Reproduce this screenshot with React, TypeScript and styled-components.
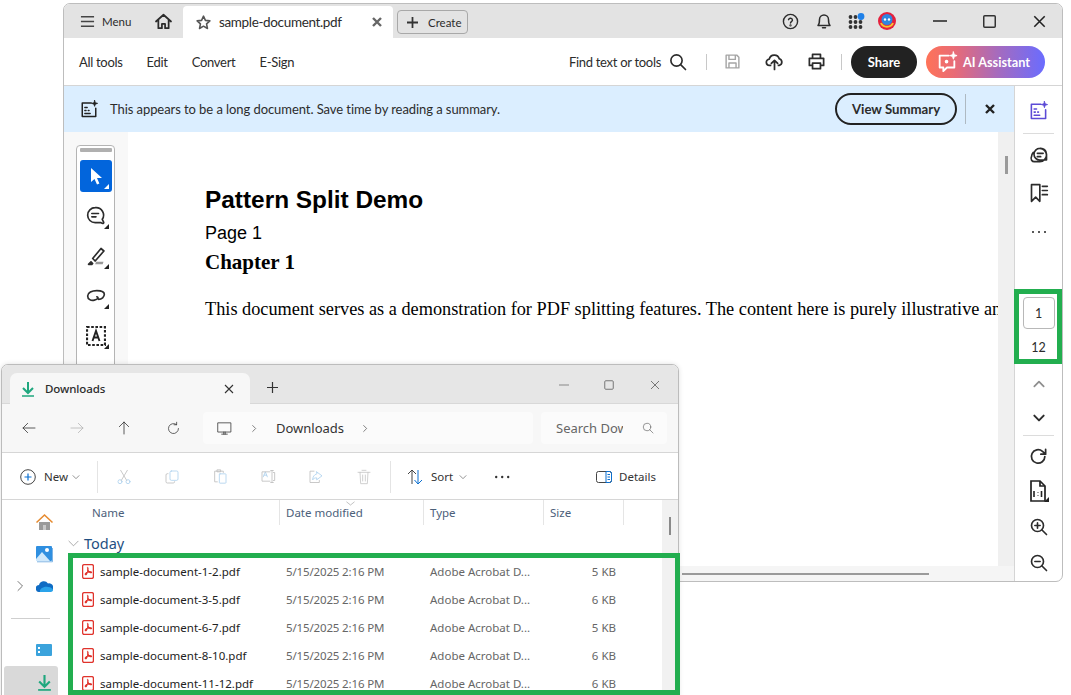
import React from "react";
import styled, { createGlobalStyle } from "styled-components";

const Global = createGlobalStyle`
  html, body { margin: 0; padding: 0; background: #fff; }
  body { font-family: "Noto Sans", "Open Sans", sans-serif; color: #2c2c2c; }
  * { box-sizing: border-box; }
`;

const Desktop = styled.div`
  position: relative;
  width: 1071px;
  height: 695px;
  overflow: hidden;
  background: #fff;
`;

/* ---------- Acrobat window ---------- */
const AcrobatWindow = styled.div`
  position: absolute;
  left: 63px;
  top: 3px;
  width: 1000px;
  height: 579px;
  border: 1px solid #bdbdbd;
  border-radius: 7px;
  overflow: hidden;
  display: flex;
  flex-direction: column;
  background: #fff;
  font-family: Lato, "Noto Sans", sans-serif;
`;
const TitleBar = styled.div`
  height: 34px;
  flex: none;
  background: #e3e3e3;
  display: flex;
  align-items: stretch;
`;
const Slot = styled.div<{ $w: number; $ml?: number }>`
  flex: none;
  width: ${(p) => p.$w}px;
  margin-left: ${(p) => p.$ml ?? 0}px;
  display: flex;
  align-items: center;
  justify-content: center;
`;
const MenuLabel = styled.span`
  font-size: 11.5px;
  margin-left: 7px;
`;
const MenuButton = styled.div`
  display: flex;
  align-items: center;
  padding-left: 16px;
  width: 80px;
`;
const DocTab = styled.div`
  width: 210px;
  background: #fff;
  border-radius: 4px 4px 0 0;
  margin-top: 2px;
  display: flex;
  align-items: center;
  padding-left: 12px;
  gap: 7px;
`;
const TabTitle = styled.span`
  font-size: 13.5px;
  letter-spacing: -0.35px;
  width: 146px;
  white-space: nowrap;
`;
const CreateButton = styled.div`
  width: 71px;
  height: 24px;
  margin: 6px 0 0 4px;
  border: 1px solid #a8a8a8;
  border-radius: 4px;
  display: flex;
  align-items: center;
  gap: 10px;
  padding-left: 9px;
  font-size: 11.5px;
`;
const Spacer = styled.div`
  flex: 1;
`;
const MainBar = styled.div`
  height: 48px;
  flex: none;
  display: flex;
  align-items: center;
  padding-left: 15px;
  border-bottom: 1px solid #d5d5d5;
`;
const NavLinks = styled.div`
  display: flex;
  gap: 24px;
  font-size: 13px;
  letter-spacing: -0.3px;
`;
const FindLabel = styled.span`
  font-size: 13px;
  letter-spacing: -0.3px;
  white-space: nowrap;
`;
const BarRule = styled.div`
  width: 1px;
  height: 16px;
  background: #c8c8c8;
`;
const ShareButton = styled.div`
  width: 66px;
  height: 32px;
  margin-left: 9px;
  border-radius: 16px;
  background: #222;
  color: #fff;
  font-size: 13px;
  font-weight: 700;
  display: flex;
  align-items: center;
  justify-content: center;
`;
const AiButton = styled.div`
  width: 119px;
  height: 32px;
  margin-left: 9px;
  border-radius: 16px;
  background: linear-gradient(90deg, #ff7358 0%, #e76b78 25%, #a66bbd 60%, #6a6cff 100%);
  color: #fff;
  font-size: 12.7px;
  font-weight: 700;
  display: flex;
  align-items: center;
  gap: 5px;
  padding-left: 10px;
`;
const WorkArea = styled.div`
  flex: 1;
  display: flex;
  min-height: 0;
`;
const MainColumn = styled.div`
  flex: 1;
  min-width: 0;
  display: flex;
  flex-direction: column;
`;
const Banner = styled.div`
  height: 46px;
  flex: none;
  background: #dbeeff;
  display: flex;
  align-items: center;
  padding-left: 16px;
`;
const BannerText = styled.span`
  font-size: 13px;
  letter-spacing: -0.07px;
  margin-left: 12px;
  white-space: nowrap;
`;
const SummaryButton = styled.div`
  width: 122px;
  height: 32px;
  border: 2px solid #222;
  border-radius: 16px;
  font-size: 13.2px;
  font-weight: 700;
  display: flex;
  align-items: center;
  justify-content: center;
`;
const BannerRule = styled.div`
  width: 1px;
  height: 30px;
  background: #aeb9c2;
  margin-left: 8px;
`;
const DocRow = styled.div`
  flex: 1;
  min-height: 0;
  display: flex;
`;
const ToolGutter = styled.div`
  width: 64px;
  flex: none;
  background: #f8f8f8;
  padding: 13px 0 0 12px;
  overflow: hidden;
`;
const ToolStrip = styled.div`
  width: 39px;
  height: 400px;
  border: 1px solid #b4b4b4;
  border-radius: 4px 4px 0 0;
  background: #fff;
  display: flex;
  flex-direction: column;
  align-items: center;
  padding: 2px 0 0;
`;
const StripHandle = styled.div`
  width: 32px;
  height: 4px;
  border-radius: 1px;
  background: #b0b0b0;
  margin-bottom: 8px;
`;
const ToolButton = styled.div<{ $active?: boolean }>`
  position: relative;
  width: 32px;
  height: ${(p) => (p.$active ? 32 : 40)}px;
  margin-bottom: ${(p) => (p.$active ? 4 : 0)}px;
  border-radius: 3px;
  background: ${(p) => (p.$active ? "#0265dc" : "transparent")};
  display: flex;
  align-items: center;
  justify-content: center;
  &::after {
    content: "";
    position: absolute;
    right: 3px;
    bottom: ${(p) => (p.$active ? 3 : 7)}px;
    width: 0;
    height: 0;
    border-left: 5px solid transparent;
    border-bottom: 5px solid ${(p) => (p.$active ? "#fff" : "#222")};
  }
`;
const Page = styled.div`
  flex: 1;
  min-width: 0;
  background: #fff;
  padding: 53px 0 0 77px;
  overflow: hidden;
  white-space: nowrap;
`;
const DocTitle = styled.div`
  font: 700 24.4px/30px "Liberation Sans", Arial, sans-serif;
  color: #000;
`;
const DocPage = styled.div`
  font: 400 18px/21px "Liberation Sans", Arial, sans-serif;
  color: #000;
  margin-top: 8px;
`;
const DocChapter = styled.div`
  font: 700 21px/24px "Liberation Serif", "Times New Roman", serif;
  color: #000;
  margin-top: 6px;
`;
const DocPara = styled.div`
  font: 400 18.3px/22px "Liberation Serif", "Times New Roman", serif;
  color: #000;
  margin-top: 24px;
`;
const VScroll = styled.div`
  width: 16px;
  flex: none;
  background: #f0f0f0;
  display: flex;
  justify-content: center;
  padding-top: 24px;
`;
const VThumb = styled.div`
  width: 3px;
  height: 18px;
  background: #9a9a9a;
`;
const HScroll = styled.div`
  height: 15px;
  flex: none;
  background: #f5f5f5;
  display: flex;
  align-items: center;
  padding-left: 618px;
`;
const HThumb = styled.div`
  width: 247px;
  height: 2px;
  background: #9a9a9a;
`;
const Rail = styled.div`
  width: 48px;
  flex: none;
  border-left: 1px solid #d5d5d5;
  display: flex;
  flex-direction: column;
  align-items: stretch;
  padding-top: 5px;
`;
const RailButton = styled.div<{ $h: number }>`
  height: ${(p) => p.$h}px;
  flex: none;
  display: flex;
  align-items: center;
  justify-content: center;
`;
const RailRule = styled.div`
  height: 1px;
  flex: none;
  margin: 4px 8px 0;
  background: #dcdcdc;
`;
const PageBlock = styled.div`
  height: 74px;
  flex: none;
  margin-top: 35px;
  display: flex;
  flex-direction: column;
  align-items: center;
  padding-top: 8px;
  font-size: 12.5px;
`;
const PageBox = styled.div`
  width: 32px;
  height: 32px;
  border: 1px solid #b8b8b8;
  border-radius: 4px;
  display: flex;
  align-items: center;
  justify-content: center;
`;
const PageTotal = styled.div`
  margin-top: 10px;
  line-height: 17px;
`;

/* ---------- Explorer window ---------- */
const ExplorerWindow = styled.div`
  position: absolute;
  left: 1px;
  top: 364px;
  width: 678px;
  height: 340px;
  border: 1px solid #bcbcbc;
  border-radius: 7px 7px 0 0;
  overflow: hidden;
  display: flex;
  flex-direction: column;
  background: #fff;
  box-shadow: 0 0 5px rgba(0, 0, 0, 0.12);
`;
const ExTitleBar = styled.div`
  height: 39px;
  flex: none;
  background: #e6e6e6;
  display: flex;
  align-items: flex-end;
  padding-left: 8px;
  border-bottom: 1px solid #d8d8d8;
`;
const ExTab = styled.div`
  width: 240px;
  height: 31px;
  margin-bottom: -1px;
  background: #f7f7f7;
  border-radius: 7px 7px 0 0;
  display: flex;
  align-items: center;
  padding: 0 16px 0 10px;
  gap: 9px;
  font-size: 11.5px;
  font-weight: 500;
  letter-spacing: -0.1px;
`;
const ExTabTitle = styled.span`
  flex: 1;
`;
const NewTab = styled.div`
  width: 44px;
  height: 31px;
  display: flex;
  align-items: center;
  justify-content: center;
`;
const WinControls = styled.div`
  display: flex;
  height: 39px;
  align-self: flex-start;
  margin-left: auto;
`;
const NavBar = styled.div`
  height: 49px;
  flex: none;
  background: #f7f7f7;
  border-bottom: 1px solid #d6d6d6;
  display: flex;
  align-items: center;
`;
const AddressBox = styled.div`
  width: 330px;
  height: 32px;
  margin-left: 22px;
  background: #fbfbfb;
  border-radius: 4px;
  display: flex;
  align-items: center;
  padding-left: 13px;
  font-size: 13px;
  color: #333;
`;
const SearchBox = styled.div`
  width: 126px;
  height: 32px;
  margin-left: 8px;
  background: #fbfbfb;
  border-radius: 4px;
  display: flex;
  align-items: center;
  padding-left: 15px;
  font-size: 13px;
  color: #666;
`;
const SearchText = styled.span`
  width: 67px;
  overflow: hidden;
  white-space: nowrap;
  margin-right: 19px;
`;
const CommandBar = styled.div`
  height: 47px;
  flex: none;
  border-bottom: 1px solid #d6d6d6;
  padding-top: 1px;
  display: flex;
  align-items: center;
  font-size: 11.5px;
  color: #333;
`;
const CmdRule = styled.div<{ $ml: number }>`
  width: 1px;
  height: 32px;
  background: #e4e4e4;
  margin-left: ${(p) => p.$ml}px;
`;
const CmdLabel = styled.span<{ $ml?: number }>`
  margin-left: ${(p) => p.$ml ?? 0}px;
  white-space: nowrap;
`;
const ExBody = styled.div`
  flex: 1;
  min-height: 0;
  display: flex;
`;
const Sidebar = styled.div`
  width: 59px;
  flex: none;
  padding: 6px 0 0 2px;
  display: flex;
  flex-direction: column;
`;
const SideItem = styled.div<{ $selected?: boolean }>`
  position: relative;
  width: 54px;
  height: 32px;
  flex: none;
  padding-left: 32px;
  display: flex;
  align-items: center;
  background: ${(p) => (p.$selected ? "#d9d9d9" : "transparent")};
  border-radius: 3px;
`;
const SideChevron = styled.span`
  position: absolute;
  left: 10px;
  top: 10px;
  display: flex;
`;
const SideRule = styled.div`
  height: 32px;
  flex: none;
  width: 54px;
  display: flex;
  align-items: center;
  padding: 0 8px 0 7px;
  &::before {
    content: "";
    flex: 1;
    height: 1px;
    background: #cfcfcf;
  }
`;
const ListPane = styled.div`
  flex: 1;
  min-width: 0;
  font-size: 11.5px;
`;
const HeaderRow = styled.div`
  position: relative;
  display: grid;
  grid-template-columns: 219px 144px 120px 80px;
  height: 25px;
  color: #4c607a;
  align-items: center;
`;
const HeaderCell = styled.div<{ $first?: boolean }>`
  height: 25px;
  line-height: 25px;
  padding-left: ${(p) => (p.$first ? 31 : 6)}px;
  border-right: 1px solid #e5e5e5;
`;
const SortCaret = styled.span`
  position: absolute;
  left: 285px;
  top: -1px;
  display: flex;
`;
const GroupRow = styled.div`
  height: 32px;
  padding: 4px 0 0 7px;
  display: flex;
  align-items: center;
  gap: 5px;
  color: #1f4f82;
  font-size: 14.5px;
`;
const FileRow = styled.div`
  display: grid;
  grid-template-columns: 219px 144px 120px 74px;
  height: 28px;
  align-items: center;
  color: #666;
  white-space: nowrap;
`;
const NameCell = styled.div`
  display: flex;
  align-items: center;
  gap: 6px;
  padding-left: 21px;
  color: #222;
`;
const DateCell = styled.div`
  padding-left: 6px;
  letter-spacing: -0.15px;
`;
const TypeCell = styled.div`
  padding-left: 6px;
`;
const SizeCell = styled.div`
  text-align: right;
  padding-right: 2px;
`;
const ExScroll = styled.div`
  width: 16px;
  flex: none;
  background: #f1f1f1;
  padding: 17px 0 0 7px;
`;
const ExThumb = styled.div`
  width: 2px;
  height: 18px;
  background: #8a8a8a;
`;
const Highlight = styled.div<{ $l: number; $t: number; $w: number; $h: number }>`
  position: absolute;
  left: ${(p) => p.$l}px;
  top: ${(p) => p.$t}px;
  width: ${(p) => p.$w}px;
  height: ${(p) => p.$h}px;
  border: 5px solid #22ae4f;
  pointer-events: none;
`;

/* ---------- icons ---------- */
type P = { s?: number; c?: string };
const Ico: React.FC<P & { sw?: number; vb?: string; children: React.ReactNode }> = ({ s = 18, c = "#2c2c2c", sw = 1.8, vb = "0 0 24 24", children }) => (
  <svg width={s} height={s} viewBox={vb} fill="none" stroke={c} strokeWidth={sw} strokeLinecap="round" strokeLinejoin="round">
    {children}
  </svg>
);
const Burger = () => <Ico s={15} vb="0 0 16 16" sw={1.5} c="#444"><path d="M1 3h14M1 8h14M1 13h14" strokeLinecap="butt" /></Ico>;
const Home = () => <Ico s={19} sw={2.2}><path d="M2.500 12 12 3.500 21.500 12M5.500 10v10.500h4.500v-5.500h4v5.500h4.500V10" /></Ico>;
const Star = () => <Ico s={17} c="#555" sw={2.2}><path d="M12 3l2.700 6 6.300.7-4.700 4.300 1.300 6.500L12 17.200 6.400 20.500l1.300-6.500L3 9.700 9.300 9z" /></Ico>;
const X = ({ s = 10, c = "#666", sw = 2.4 }: P & { sw?: number }) => <Ico s={s} vb="0 0 10 10" c={c} sw={sw}><path d="M1 1l8 8M9 1l-8 8" strokeLinecap="butt" /></Ico>;
const Plus = ({ s = 11, c = "#333", sw = 1.6 }: P & { sw?: number }) => <Ico s={s} vb="0 0 10 10" c={c} sw={sw}><path d="M5 0v10M0 5h10" strokeLinecap="butt" /></Ico>;
const Help = () => <Ico s={17} sw={2}><circle cx="12" cy="12" r="10" /><path d="M9.200 9.400a2.900 2.900 0 0 1 5.600.6c0 2-2.800 2.400-2.800 4.200" /><circle cx="12" cy="17.500" r=".6" /></Ico>;
const Bell = () => <Ico s={18} sw={2}><path d="M4 18c2-2 2-4 2-8a6 6 0 0 1 12 0c0 4 0 6 2 8zM10 21h4" /></Ico>;
const Apps = () => (
  <svg width="17" height="17" viewBox="0 0 17 17">
    {[0, 1, 2].flatMap((r) => [0, 1, 2].map((k) => <circle key={`${r}${k}`} cx={2.500 + k * 5} cy={4 + r * 5} r={1.900} fill="#333" />))}
    <circle cx="13" cy="3.500" r="3.400" fill="#1f80e8" />
  </svg>
);
const Avatar = () => (
  <svg width="18" height="18" viewBox="0 0 18 18">
    <circle cx="9" cy="9" r="9" fill="#e5213d" />
    <circle cx="9" cy="7.500" r="5.500" fill="#2f86e0" />
    <path d="M3 11c2 5 10 5 12 0" stroke="#f6c431" strokeWidth="2" fill="none" />
    <circle cx="7" cy="7.500" r="1.200" fill="#fff" /><circle cx="11" cy="7.500" r="1.200" fill="#fff" />
  </svg>
);
const Min = ({ c = "#222", w = 14, sw = 1.6 }: { c?: string; w?: number; sw?: number }) => <svg width={w} height="4" viewBox={`0 0 ${w} 4`}><path d={`M0 2h${w}`} stroke={c} strokeWidth={sw} /></svg>;
const Max = ({ c = "#333", s = 13, sw = 1.500 }: { c?: string; s?: number; sw?: number }) => <svg width={s} height={s} viewBox={`0 0 ${s} ${s}`}><rect x=".75" y=".75" width={s - 1.500} height={s - 1.500} rx="1" fill="none" stroke={c} strokeWidth={sw} /></svg>;
const Search = () => <Ico s={18} sw={2.200}><circle cx="10" cy="10" r="7.500" /><path d="M15.500 15.500 22 22" /></Ico>;
const Save = () => <Ico s={17} c="#a5a5a5" sw={2}><path d="M3 3h15l3 3v15H3zM7 3v6h9V3M7 21v-7h10v7" /></Ico>;
const Upload = () => <Ico s={19} sw={2.200}><path d="M7 17H6a4 4 0 0 1-.6-8A6.500 6.500 0 0 1 18 8.500 4.400 4.400 0 0 1 18 17h-1M12 22V11M8 14.500 12 10.500l4 4" /></Ico>;
const Print = () => <Ico s={19} sw={2.200}><path d="M7 8V3h10v5M7 17H3V8h18v9h-4M7 14h10v7H7z" /></Ico>;
const Spark = ({ c = "#222", s = 18 }: P) => (
  <Ico s={s} c={c} sw={2}>
    <path d="M15 4H3v18h18V11" />
    <path d="M6.500 10h3M6.500 14h1.500M11 14h1M6.500 18h7" />
    <path d="M19.500 .5l1 3 3 1-3 1-1 3-1-3-3-1 3-1z" fill={c} strokeWidth="1" />
  </Ico>
);
const AiIcon = () => (
  <Ico s={22} c="#fff" sw={2}>
    <path d="M14 5H4v13h4v4l4-4h8v-7" />
    <circle cx="11.500" cy="11.500" r="1" fill="#fff" />
    <path d="M19 1l1 3 3 1-3 1-1 3-1-3-3-1 3-1z" fill="#fff" strokeWidth="1" />
  </Ico>
);
const Arrow = ({ c = "#fff" }: P) => <svg width="14" height="17" viewBox="0 0 14 17"><path d="M2 0v14l3.500-3 2.500 5.500 2.400-1L8 10h5z" fill={c} /></svg>;
const Comment = () => <Ico s={20} sw={2}><path d="M11 2a9 9 0 1 0 0 18h7c2 1.500 4 1 3-1l-1.500-3A9 9 0 0 0 11 2z" /><path d="M7 9h8M7 13h5" /></Ico>;
const Highlighter = () => (
  <Ico s={20} sw={2}>
    <path d="M8 15 18 3l3.500 3L11 18z" />
    <path d="M3 22l3-3 2 2-1 1z" fill="#222" />
    <path d="M11 22h9l1-3h-9z" fill="#999" stroke="none" />
  </Ico>
);
const Lasso = () => <Ico s={20} sw={2}><path d="M15 16c4 0 7-3 7-6 0-2.500-3-4.500-9-4.500S2 8 2 12s4 6 8 5 6-3 3-4" /></Ico>;
const TextSelect = () => (
  <svg width="20" height="20" viewBox="0 0 20 20" fill="none">
    <rect x="1" y="1" width="18" height="18" stroke="#222" strokeWidth="2.200" strokeDasharray="2.600 1.600" />
    <path d="M6.500 15 10 5l3.500 10M7.800 11.500h4.400" stroke="#222" strokeWidth="1.900" />
  </svg>
);
const CommentStack = () => <Ico s={20} sw={2}><path d="M13 4a8 8 0 1 1 0 16H7a4 4 0 0 1-4-6 8 8 0 0 1 2-5M13 4a7 7 0 0 0-7 7 7 7 0 0 0 7 7h8v-7a7 7 0 0 0-8-7z" /><path d="M10 10h7M10 14h4" /></Ico>;
const Bookmark = () => <Ico s={20} sw={2}><path d="M3 2h10v20l-5-5-5 5zM16 4h6M16 9h6M16 14h6" /></Ico>;
const Dots = ({ c = "#222", g = 6, r = 1 }: { c?: string; g?: number; r?: number }) => <svg width={g * 2 + r * 2 + 2} height="6" viewBox={`0 0 ${g * 2 + r * 2 + 2} 6`}>{[0, 1, 2].map((i) => <circle key={i} cx={r + 1 + i * g} cy="3" r={r} fill={c} />)}</svg>;
const ChevUp = () => <Ico s={14} c="#8e8e8e" sw={3}><path d="M4 16l8-8 8 8" /></Ico>;
const ChevDown = () => <Ico s={14} sw={3.400}><path d="M4 8l8 8 8-8" /></Ico>;
const Rotate = () => <Ico s={19} sw={2.200}><path d="M20 12a8.500 8.500 0 1 1-3-6.500L21 9M21 3v6h-6" /></Ico>;
const FitPage = () => (
  <svg width="20" height="22" viewBox="0 0 20 22" fill="none">
    <path d="M2 1h9l5 5v15H2z" stroke="#222" strokeWidth="1.700" />
    <path d="M11 1v5h5" stroke="#222" strokeWidth="1.700" />
    <path d="M5 11v6M9 12v.5M9 15.500v.5M12.500 11v6" stroke="#222" strokeWidth="1.600" />
    <path d="M20 17v5h-5z" fill="#222" />
  </svg>
);
const Zoom = ({ plus }: { plus?: boolean }) => <Ico s={18} sw={2.200}><circle cx="10" cy="10" r="8" /><path d="M16 16l6 6M6.500 10h7" />{plus && <path d="M10 6.500v7" />}</Ico>;
const Thin = ({ s = 18, c = "#333", children }: P & { children: React.ReactNode }) => <Ico s={s} c={c} sw={1.200}>{children}</Ico>;
const Dl = ({ s = 16 }: P) => <svg width={s} height={s} viewBox="0 0 16 16" fill="none"><path d="M8 1v10M3 7l5 5 5-5" stroke="#1fa77e" strokeWidth="2" /><path d="M2 15h12" stroke="#1fa77e" strokeWidth="1.600" /></svg>;
const Chev = ({ c = "#444", s = 10 }: P) => <Ico s={s} c={c} sw={2}><path d="M8 3l9 9-9 9" /></Ico>;
const Down = ({ c = "#777", s = 8 }: P) => <Ico s={s} c={c} sw={2.400}><path d="M3 8l9 9 9-9" /></Ico>;
const Pdf = () => (
  <svg width="12" height="15" viewBox="0 0 12 15" fill="none">
    <rect x=".6" y=".6" width="10.800" height="13.800" rx="1.600" fill="#fff" stroke="#e0332c" strokeWidth="1.300" />
    <path d="M6 3.500c-.6 2 .3 3.500 1.300 4.600.7.7 1.900.8 2.200.3.2-.6-1.200-.8-2.600-.6-1.400.2-3 .9-3.500 2-.4.9.4 1.200 1 .5.9-1 1.600-3.500 1.400-5.700-.1-1.200-.3-1.500-.6-1.100" stroke="#e0332c" strokeWidth="1.200" />
  </svg>
);

const files: [string, string][] = [
  ["sample-document-1-2.pdf", "5 KB"],
  ["sample-document-3-5.pdf", "6 KB"],
  ["sample-document-6-7.pdf", "5 KB"],
  ["sample-document-8-10.pdf", "6 KB"],
  ["sample-document-11-12.pdf", "6 KB"],
];

const railTop: [number, React.ReactNode][] = [
  [42, <CommentStack key="c" />],
  [34, <Bookmark key="b" />],
  [44, <Dots key="d" g={6} r={1} />],
];

export default function App() {
  return (
    <Desktop>
      <Global />
      <AcrobatWindow>
        <TitleBar>
          <MenuButton>
            <Burger />
            <MenuLabel>Menu</MenuLabel>
          </MenuButton>
          <Slot $w={39}><Home /></Slot>
          <DocTab>
            <Star />
            <TabTitle>sample-document.pdf</TabTitle>
            <X />
          </DocTab>
          <CreateButton><Plus />Create</CreateButton>
          <Spacer />
          <Slot $w={17}><Help /></Slot>
          <Slot $w={18} $ml={16}><Bell /></Slot>
          <Slot $w={17} $ml={15}><Apps /></Slot>
          <Slot $w={18} $ml={13}><Avatar /></Slot>
          <Slot $w={14} $ml={37}><Min /></Slot>
          <Slot $w={14} $ml={35}><Max /></Slot>
          <Slot $w={14} $ml={36}><X s={13} c="#222" sw={1.200} /></Slot>
          <Slot $w={16} />
        </TitleBar>
        <MainBar>
          <NavLinks>
            <span>All tools</span>
            <span>Edit</span>
            <span>Convert</span>
            <span>E-Sign</span>
          </NavLinks>
          <Spacer />
          <FindLabel>Find text or tools</FindLabel>
          <Slot $w={18} $ml={8}><Search /></Slot>
          <Slot $w={1} $ml={19}><BarRule /></Slot>
          <Slot $w={17} $ml={17}><Save /></Slot>
          <Slot $w={19} $ml={24}><Upload /></Slot>
          <Slot $w={19} $ml={23}><Print /></Slot>
          <Slot $w={1} $ml={15}><BarRule /></Slot>
          <ShareButton>Share</ShareButton>
          <AiButton><AiIcon />AI Assistant</AiButton>
          <Slot $w={17} />
        </MainBar>
        <WorkArea>
          <MainColumn>
            <Banner>
              <Spark />
              <BannerText>This appears to be a long document. Save time by reading a summary.</BannerText>
              <Spacer />
              <SummaryButton>View Summary</SummaryButton>
              <BannerRule />
              <Slot $w={11} $ml={18}><X c="#222" /></Slot>
              <Slot $w={19} />
            </Banner>
            <DocRow>
              <ToolGutter>
                <ToolStrip>
                  <StripHandle />
                  <ToolButton $active><Arrow /></ToolButton>
                  <ToolButton><Comment /></ToolButton>
                  <ToolButton><Highlighter /></ToolButton>
                  <ToolButton><Lasso /></ToolButton>
                  <ToolButton><TextSelect /></ToolButton>
                </ToolStrip>
              </ToolGutter>
              <Page>
                <DocTitle>Pattern Split Demo</DocTitle>
                <DocPage>Page 1</DocPage>
                <DocChapter>Chapter 1</DocChapter>
                <DocPara>This document serves as a demonstration for PDF splitting features. The content here is purely illustrative and</DocPara>
              </Page>
              <VScroll><VThumb /></VScroll>
            </DocRow>
            <HScroll><HThumb /></HScroll>
          </MainColumn>
          <Rail>
            <RailButton $h={38}><Spark c="#5c4bd6" s={19} /></RailButton>
            <RailRule />
            {railTop.map(([h, icon], i) => <RailButton key={i} $h={h}>{icon}</RailButton>)}
            <PageBlock>
              <PageBox>1</PageBox>
              <PageTotal>12</PageTotal>
            </PageBlock>
            <RailButton $h={42}><ChevUp /></RailButton>
            <RailButton $h={26}><ChevDown /></RailButton>
            <RailRule />
            <RailButton $h={40}><Rotate /></RailButton>
            <RailButton $h={30}><FitPage /></RailButton>
            <RailButton $h={42}><Zoom plus /></RailButton>
            <RailButton $h={30}><Zoom /></RailButton>
          </Rail>
        </WorkArea>
      </AcrobatWindow>

      <ExplorerWindow>
        <ExTitleBar>
          <ExTab>
            <Dl />
            <ExTabTitle>Downloads</ExTabTitle>
            <X s={10} c="#333" sw={1.100} />
          </ExTab>
          <NewTab><Plus c="#333" sw={1.100} /></NewTab>
          <WinControls>
            <Slot $w={10}><Min c="#888" w={10} sw={1} /></Slot>
            <Slot $w={10} $ml={35}><Max c="#777" s={10} sw={1} /></Slot>
            <Slot $w={10} $ml={36}><X s={10} c="#777" sw={1} /></Slot>
            <Slot $w={18} />
          </WinControls>
        </ExTitleBar>
        <NavBar>
          <Slot $w={16} $ml={19}><Thin s={16}><path d="M21 12H3M10 5l-7 7 7 7" /></Thin></Slot>
          <Slot $w={16} $ml={32}><Thin s={16} c="#b5b5b5"><path d="M3 12h18M14 5l7 7-7 7" /></Thin></Slot>
          <Slot $w={16} $ml={31}><Thin s={16}><path d="M12 21V3M5 10l7-7 7 7" /></Thin></Slot>
          <Slot $w={16} $ml={33}><Thin s={15}><path d="M20 12a8 8 0 1 1-3-6.200M17 2v4h-4" /></Thin></Slot>
          <AddressBox>
            <Thin s={17} c="#444"><path d="M3 4h18v13H3zM8 20h8M11 17v3M13 17v3" /></Thin>
            <Slot $w={8} $ml={17}><Chev s={9} /></Slot>
            <CmdLabel $ml={18}>Downloads</CmdLabel>
            <Slot $w={8} $ml={17}><Chev s={9} /></Slot>
          </AddressBox>
          <SearchBox>
            <SearchText>Search Downloads</SearchText>
            <Thin s={12} c="#555"><circle cx="10" cy="10" r="7.500" /><path d="M15.500 15.500 22 22" /></Thin>
          </SearchBox>
        </NavBar>
        <CommandBar>
          <Slot $w={16} $ml={18}>
            <svg width="16" height="16" viewBox="0 0 16 16" fill="none"><circle cx="8" cy="8" r="7.300" stroke="#444" /><path d="M8 4.500v7M4.500 8h7" stroke="#0a6fd0" strokeWidth="1.200" /></svg>
          </Slot>
          <CmdLabel $ml={8}>New</CmdLabel>
          <Slot $w={8} $ml={4}><Down /></Slot>
          <CmdRule $ml={17} />
          <Slot $w={16} $ml={18}><Thin s={16} c="#a9cfee"><circle cx="6" cy="19" r="3" /><circle cx="18" cy="19" r="3" /><path d="M8 17 17 2M16 17 7 2" stroke="#bbb" /></Thin></Slot>
          <Slot $w={16} $ml={32}><Thin s={16} c="#a9cfee"><rect x="9" y="3" width="12" height="14" rx="2" /><path d="M6 7H5a2 2 0 0 0-2 2v10a2 2 0 0 0 2 2h9a2 2 0 0 0 2-2" stroke="#bbb" /></Thin></Slot>
          <Slot $w={16} $ml={32}><Thin s={17} c="#a9cfee"><rect x="11" y="8" width="10" height="14" rx="1" /><path d="M8 20H4V4h13v2M8 2h5v3H8z" stroke="#bbb" /></Thin></Slot>
          <Slot $w={16} $ml={32}><Thin s={17} c="#a9cfee"><path d="M5 12.500 8 5l3 7.500M6 10h4" /><path d="M15 5H3v14h12M18 3v18M16 3h4M16 21h4M20 6h2v12h-2" stroke="#bbb" /></Thin></Slot>
          <Slot $w={16} $ml={32}><Thin s={17} c="#a9cfee"><path d="M13 5l8 6-8 6v-3c-3 0-5 1-6 3 0-4 2-8 6-9z" /><path d="M9 4H3v17h14v-3" stroke="#bbb" /></Thin></Slot>
          <Slot $w={16} $ml={32}><Thin s={16} c="#c4c4c4"><path d="M3 5h18M6 5l1 17h10l1-17M9 2h6M10 9v9M14 9v9" /></Thin></Slot>
          <CmdRule $ml={18} />
          <Slot $w={17} $ml={16}>
            <svg width="17" height="16" viewBox="0 0 17 16" fill="none"><path d="M5 15V1M1 5l4-4 4 4" stroke="#444" /><path d="M11 1v14M7.500 11l3.500 4 4-4" stroke="#0a6fd0" /></svg>
          </Slot>
          <CmdLabel $ml={7}>Sort</CmdLabel>
          <Slot $w={8} $ml={6}><Down /></Slot>
          <Slot $w={18} $ml={26}><Dots g={6} r={1.200} c="#333" /></Slot>
          <Spacer />
          <Slot $w={16}>
            <svg width="16" height="12" viewBox="0 0 16 12" fill="none"><rect x=".5" y=".5" width="15" height="11" rx="2" stroke="#444" /><path d="M10 .5h3.500a2 2 0 0 1 2 2v7a2 2 0 0 1-2 2H10z" stroke="#0a6fd0" /><path d="M11.500 3.500h2.500M11.500 6h2.500M11.500 8.500h2.500" stroke="#0a6fd0" /></svg>
          </Slot>
          <CmdLabel $ml={7}>Details</CmdLabel>
          <Slot $w={22} />
        </CommandBar>
        <ExBody>
          <Sidebar>
            <SideItem>
              <svg width="17" height="16" viewBox="0 0 17 16"><path d="M3 8h11v8H3z" fill="#9a9a9a" /><path d="M8.500 0 0 8l1 1 7.500-7L16 9l1-1z" fill="#e68a2e" /><path d="M7 11h3v5H7z" fill="#c9c9c9" /></svg>
            </SideItem>
            <SideItem>
              <svg width="17" height="17" viewBox="0 0 17 17"><rect y="0" width="16" height="15" rx="1" fill="#2f8fe0" /><circle cx="11" cy="4" r="2" fill="#fff" /><path d="M0 13l6-7 8 9H0z" fill="#cfe8fb" /><path d="M1 15.800h15.500V2" stroke="#7fb4e4" fill="none" /></svg>
            </SideItem>
            <SideItem>
              <SideChevron><Chev c="#777" s={12} /></SideChevron>
              <svg width="17" height="11" viewBox="0 0 17 11"><path d="M3.500 11a3.500 3.500 0 0 1-.5-7 5 5 0 0 1 9-1.500A3.800 3.800 0 0 1 14 11z" fill="#0f6cc4" /><path d="M4 11c-1-3 4-6 8-5 3 0 5 2 5 3s-1 2-3 2z" fill="#2aa3ea" /></svg>
            </SideItem>
            <SideRule />
            <SideItem>
              <svg width="16" height="12" viewBox="0 0 16 12"><rect width="16" height="12" rx="1" fill="#3ba3dc" /><rect x="2" y="3" width="2" height="2" fill="#fff" /><rect x="2" y="7" width="2" height="2" fill="#fff" /></svg>
            </SideItem>
            <SideItem $selected><Dl s={17} /></SideItem>
          </Sidebar>
          <ListPane>
            <HeaderRow>
              <HeaderCell $first>Name</HeaderCell>
              <HeaderCell>Date modified</HeaderCell>
              <HeaderCell>Type</HeaderCell>
              <HeaderCell>Size</HeaderCell>
              <SortCaret><Thin s={9} c="#777"><path d="M2 8l10 8 10-8" /></Thin></SortCaret>
            </HeaderRow>
            <GroupRow>
              <Thin s={11} c="#666"><path d="M2 7l10 10 10-10" /></Thin>
              Today
            </GroupRow>
            {files.map(([name, size]) => (
              <FileRow key={name}>
                <NameCell><Pdf />{name}</NameCell>
                <DateCell>5/15/2025 2:16 PM</DateCell>
                <TypeCell>Adobe Acrobat D...</TypeCell>
                <SizeCell>{size}</SizeCell>
              </FileRow>
            ))}
          </ListPane>
          <ExScroll><ExThumb /></ExScroll>
        </ExBody>
      </ExplorerWindow>

      <Highlight $l={1014} $t={289} $w={48} $h={75} />
      <Highlight $l={68} $t={553} $w={612} $h={142} />
    </Desktop>
  );
}
